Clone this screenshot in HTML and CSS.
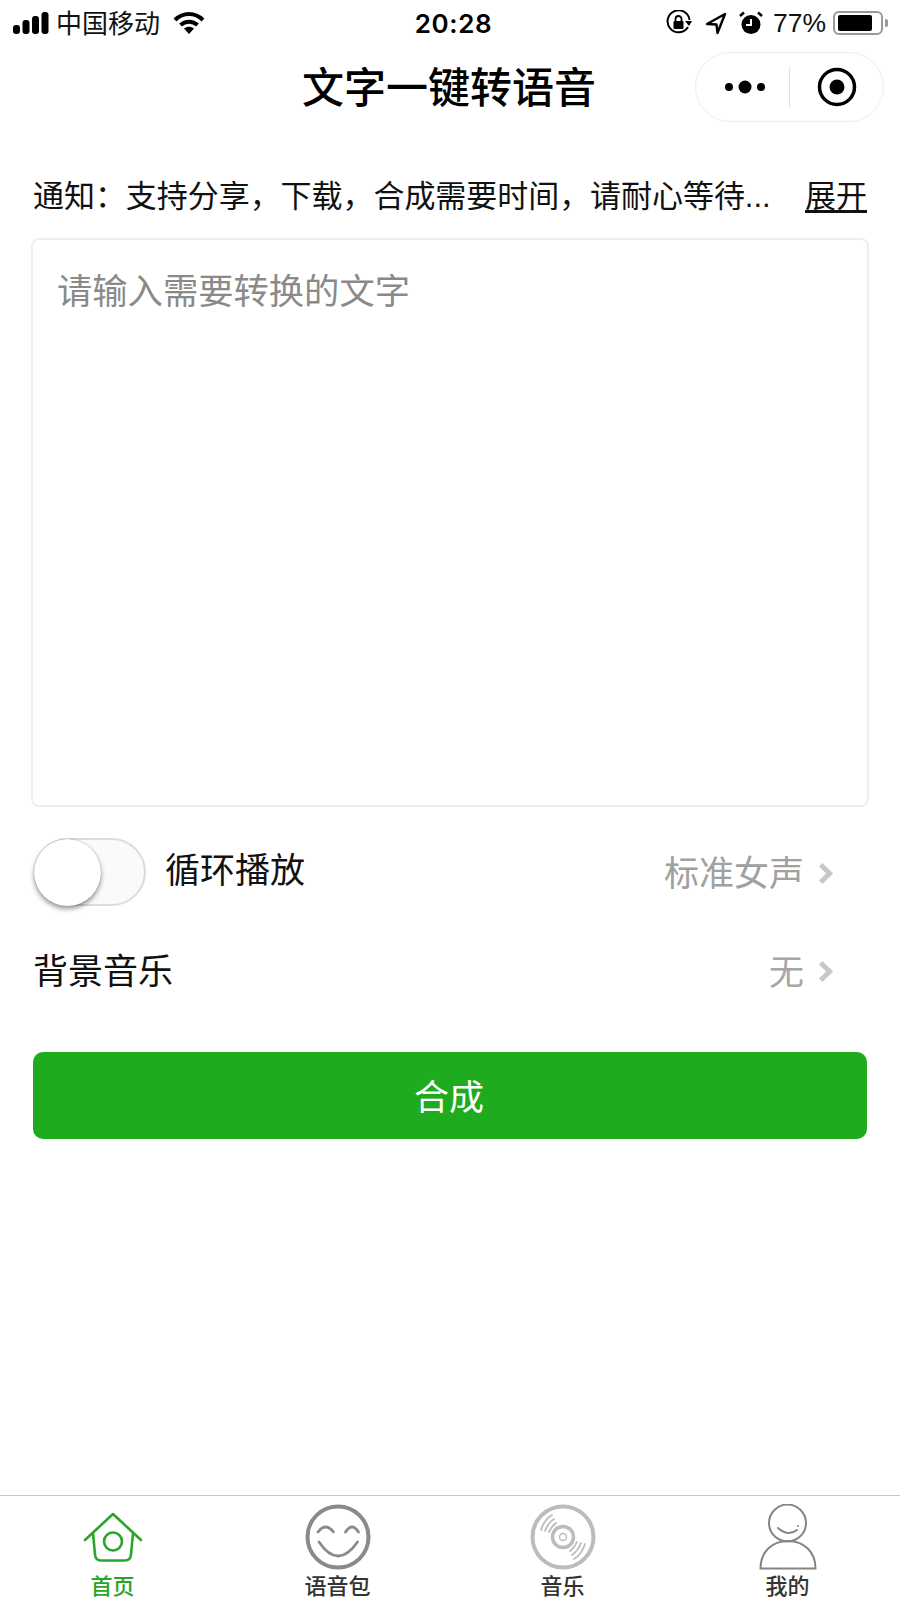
FILE: index.html
```html
<!DOCTYPE html>
<html lang="zh-CN">
<head>
    <meta charset="UTF-8">
    <title>文字一键转语音</title>
    <link rel="stylesheet" href="styles.css">
</head>
<body>
    <div class="status_bar">
        <div class="status_left">
            <svg class="signal" width="36" height="22" viewBox="0 0 36 22">
                <rect x="0" y="13" width="7" height="9" rx="3"/>
                <rect x="9.500" y="8" width="7" height="14" rx="3"/>
                <rect x="19" y="4" width="7" height="18" rx="3"/>
                <rect x="28.500" y="0" width="7" height="22" rx="3"/>
            </svg>
            <span class="carrier">中国移动</span>
            <svg class="wifi" width="32" height="22" viewBox="0 0 32 22">
                <path d="M2 8C10 0 22 0 30 8" fill="none" stroke="#000" stroke-width="4"/>
                <path d="M7.500 13C12.500 8.500 19.500 8.500 24.500 13" fill="none" stroke="#000" stroke-width="4"/>
                <path d="M11 16.500C14 14 18 14 21 16.500L16 22Z"/>
            </svg>
        </div>
        <div class="time">20:28</div>
        <div class="status_right">
            <svg width="26" height="26" viewBox="0 0 26 26">
                <path d="M22 17A11 11 0 1 1 23.500 10" fill="none" stroke="#000" stroke-width="2"/>
                <path d="M19 11H26L23 16Z"/>
                <rect x="7.500" y="11" width="10" height="8" rx="1"/>
                <path d="M9.500 11V9A3 3 0 0 1 15.500 9V11" fill="none" stroke="#000" stroke-width="1.800"/>
            </svg>
            <svg class="ic_arrow" width="24" height="24" viewBox="0 0 24 24">
                <path d="M21 3L3 13L12.500 13.500L13.500 22Z" fill="none" stroke="#000" stroke-width="2.400" stroke-linejoin="round"/>
            </svg>
            <svg class="ic_alarm" width="24" height="24" viewBox="0 0 24 24">
                <circle cx="12" cy="13.500" r="9.500"/>
                <path d="M1 5L5 1.500M23 5L19 1.500" stroke="#000" stroke-width="2.600"/>
                <path d="M12 8V14H7" fill="none" stroke="#fff" stroke-width="2"/>
            </svg>
            <span class="percent">77%</span>
            <div class="battery"><i></i></div>
            <span class="battery_nub"></span>
        </div>
    </div>

    <div class="nav_bar">
        <h1>文字一键转语音</h1>
        <div class="capsule">
            <svg class="capsule_dots" width="42" height="14" viewBox="0 0 42 14">
                <circle cx="5" cy="7" r="4"/>
                <circle cx="21" cy="7" r="6.500"/>
                <circle cx="37" cy="7" r="4"/>
            </svg>
            <span class="capsule_line"></span>
            <svg class="capsule_target" width="42" height="42" viewBox="0 0 42 42">
                <circle cx="21" cy="21" r="17.500" fill="none" stroke="#000" stroke-width="3.500"/>
                <circle cx="21" cy="21" r="7.500"/>
            </svg>
        </div>
    </div>

    <div class="main">
        <div class="notice">
            <span class="notice_text">通知：支持分享，下载，合成需要时间，请耐心等待...</span>
            <a class="notice_more">展开</a>
        </div>

        <div class="text_box">请输入需要转换的文字</div>

        <div class="row row_loop">
            <div class="row_left">
                <div class="switch"><span class="switch_thumb"></span></div>
                <span class="row_label">循环播放</span>
            </div>
            <div class="row_value"><span>标准女声</span><i class="chevron"></i></div>
        </div>
        <div class="row row_music">
            <span class="row_label">背景音乐</span>
            <div class="row_value"><span>无</span><i class="chevron"></i></div>
        </div>

        <div class="btn_make">合成</div>
    </div>

    <ul class="tab_bar">
        <li class="on">
            <svg width="66" height="66" viewBox="0 0 66 66">
                <path d="M5 36L33 10L61 36" fill="none" stroke="#2aa52a" stroke-width="2.600" stroke-linecap="round" stroke-linejoin="round"/>
                <path d="M13 29L15 50.500Q15.500 56.500 21 56.500H45Q50.500 56.500 51 50.500L53 29" fill="none" stroke="#2aa52a" stroke-width="2.600"/>
                <circle cx="33" cy="37.500" r="9" fill="none" stroke="#2aa52a" stroke-width="2.600"/>
            </svg>
            <span>首页</span>
        </li>
        <li>
            <svg width="66" height="66" viewBox="0 0 66 66">
                <circle cx="33" cy="33" r="30.500" fill="none" stroke="#8a8a8a" stroke-width="4"/>
                <path d="M13 28Q20.500 18 28.500 28M40.500 28Q47 18 53.500 28" fill="none" stroke="#8a8a8a" stroke-width="2.800" stroke-linecap="round"/>
                <path d="M14 38Q33 66 52.500 38" fill="none" stroke="#8a8a8a" stroke-width="2.800" stroke-linecap="round"/>
            </svg>
            <span>语音包</span>
        </li>
        <li>
            <svg width="66" height="66" viewBox="0 0 66 66">
                <circle cx="33" cy="33" r="30.500" fill="none" stroke="#bcbcbc" stroke-width="4"/>
                <circle cx="33" cy="33" r="10.500" fill="none" stroke="#bcbcbc" stroke-width="3.500"/>
                <circle cx="33" cy="33" r="3.500" fill="none" stroke="#bcbcbc" stroke-width="1.500"/>
                <path d="M11 26Q14 16 22 11M15 27Q18 19 24 15M19 28Q21 23 26 19M55 40Q52 50 44 55M51 39Q48 47 42 51M47 38Q45 43 40 47" fill="none" stroke="#bcbcbc" stroke-width="1.800" stroke-linecap="round"/>
            </svg>
            <span>音乐</span>
        </li>
        <li>
            <svg width="66" height="66" viewBox="0 0 66 66">
                <circle cx="32.500" cy="19" r="18.500" fill="none" stroke="#858585" stroke-width="2"/>
                <path d="M23 24Q33 33 42 26" fill="none" stroke="#858585" stroke-width="2" stroke-linecap="round"/>
                <circle cx="43" cy="22" r="1" fill="#858585"/>
                <path d="M5.500 64.500C5.500 48 17 37 33 37C49 37 60.500 48 60.500 64.500Z" fill="none" stroke="#858585" stroke-width="2"/>
            </svg>
            <span>我的</span>
        </li>
    </ul>
</body>
</html>
```

FILE: styles.css
```css
*{margin: 0;padding: 0;box-sizing: border-box;}
li{list-style-type: none;}
body{display: flex;flex-direction: column;width: 900px;height: 1600px;overflow: hidden;background: #fff;color: #000;font-family: "Liberation Sans","Noto Sans CJK SC",sans-serif;}

.status_bar{display: grid;grid-template-columns: 1fr auto 1fr;align-items: center;height: 44px;padding: 0 12px 0 13px;flex: none;}
.status_left{display: flex;align-items: center;}
.signal{margin-right: 7px;}
.carrier{padding-top: 2px;font-size: 26px;line-height: 44px;color: #111;}
.wifi{margin-left: 13px;}
.time{margin-left: 6px;font-family: Inter,"Liberation Sans",sans-serif;font-size: 26px;font-weight: 600;letter-spacing: .6px;}
.status_right{display: flex;align-items: center;justify-content: flex-end;}
.ic_arrow{margin-left: 12px;}
.ic_alarm{margin-left: 11px;}
.percent{margin-left: 10px;font-size: 26.500px;color: #111;}
.battery{width: 50px;height: 24px;margin-left: 7px;padding: 2px 3px;border: 2px solid #999;border-radius: 6px;}
.battery i{display: block;width: 85%;height: 100%;border-radius: 2px;background: #000;}
.battery_nub{width: 3px;height: 8px;margin-left: 2px;border-radius: 0 2px 2px 0;background: #999;}

.nav_bar{position: relative;display: flex;align-items: center;justify-content: center;height: 90px;flex: none;}
.nav_bar h1{margin-right: 2px;font-size: 42px;font-weight: 500;line-height: 90px;}
.capsule{position: absolute;top: 8px;right: 16px;display: flex;align-items: center;width: 189px;height: 70px;border: 1px solid #eee;border-radius: 35px;}
.capsule_dots{margin-left: 28px;}
.capsule_line{width: 1px;height: 41px;margin-left: 23px;background: #e2e2e2;}
.capsule_target{margin-left: 26px;}

.main{flex: 1;padding: 0 33px;}
.notice{display: flex;align-items: center;justify-content: space-between;height: 104px;padding: 21px 0 0;font-size: 31px;line-height: 44px;color: #111;}
.notice_text{letter-spacing: -.05px;}
.notice_more{text-decoration: underline;text-underline-offset: 3px;}
.text_box{height: 569px;margin: 0 -2px;padding: 28px 24px;border: 2px solid #eee;border-radius: 8px;font-size: 35.300px;line-height: 48px;color: #8a8a8a;}

.row{display: flex;align-items: center;justify-content: space-between;padding-right: 32px;font-size: 35px;color: #111;}
.row_loop{height: 128px;padding-top: 1px;}
.row_loop .row_label{padding-bottom: 8px;}
.row_loop .row_value span{padding-bottom: 2px;}
.row_music{height: 72px;padding-bottom: 4px;}
.row_music .row_label{padding-bottom: 2px;}
.row_left{display: flex;align-items: center;gap: 19px;}
.row_value{display: flex;align-items: center;color: #a0a0a0;}
.row_music .row_value{color: #a6a6a6;}
.chevron{width: 15px;height: 15px;margin: 4px 5px 0 11px;border-top: 5px solid #c8c8cc;border-right: 5px solid #c8c8cc;transform: rotate(45deg);}

.switch{position: relative;width: 112px;height: 68px;margin-left: 1px;border: 2px solid #dcdcdc;border-radius: 34px;background: #fafafa;}
.switch_thumb{position: absolute;left: -2px;top: -1px;width: 67px;height: 67px;border-radius: 50%;background: #fff;box-shadow: 0 3px 5px rgba(0,0,0,.4),0 0 1px rgba(0,0,0,.4);}

.btn_make{height: 87px;margin-top: 45px;padding-right: 2px;border-radius: 10px;background: #1fab1e;color: #fff;font-size: 35px;line-height: 91px;text-align: center;}

.tab_bar{display: flex;height: 105px;flex: none;border-top: 1px solid #c8c8c8;}
.tab_bar li{display: flex;flex: 1;flex-direction: column;align-items: center;padding-top: 8px;font-size: 22px;line-height: 20px;color: #333;font-weight: 500;}
.tab_bar li svg{display: block;}
.tab_bar li span{margin-top: 7px;}
.tab_bar li.on{color: #2aa52a;}
```
